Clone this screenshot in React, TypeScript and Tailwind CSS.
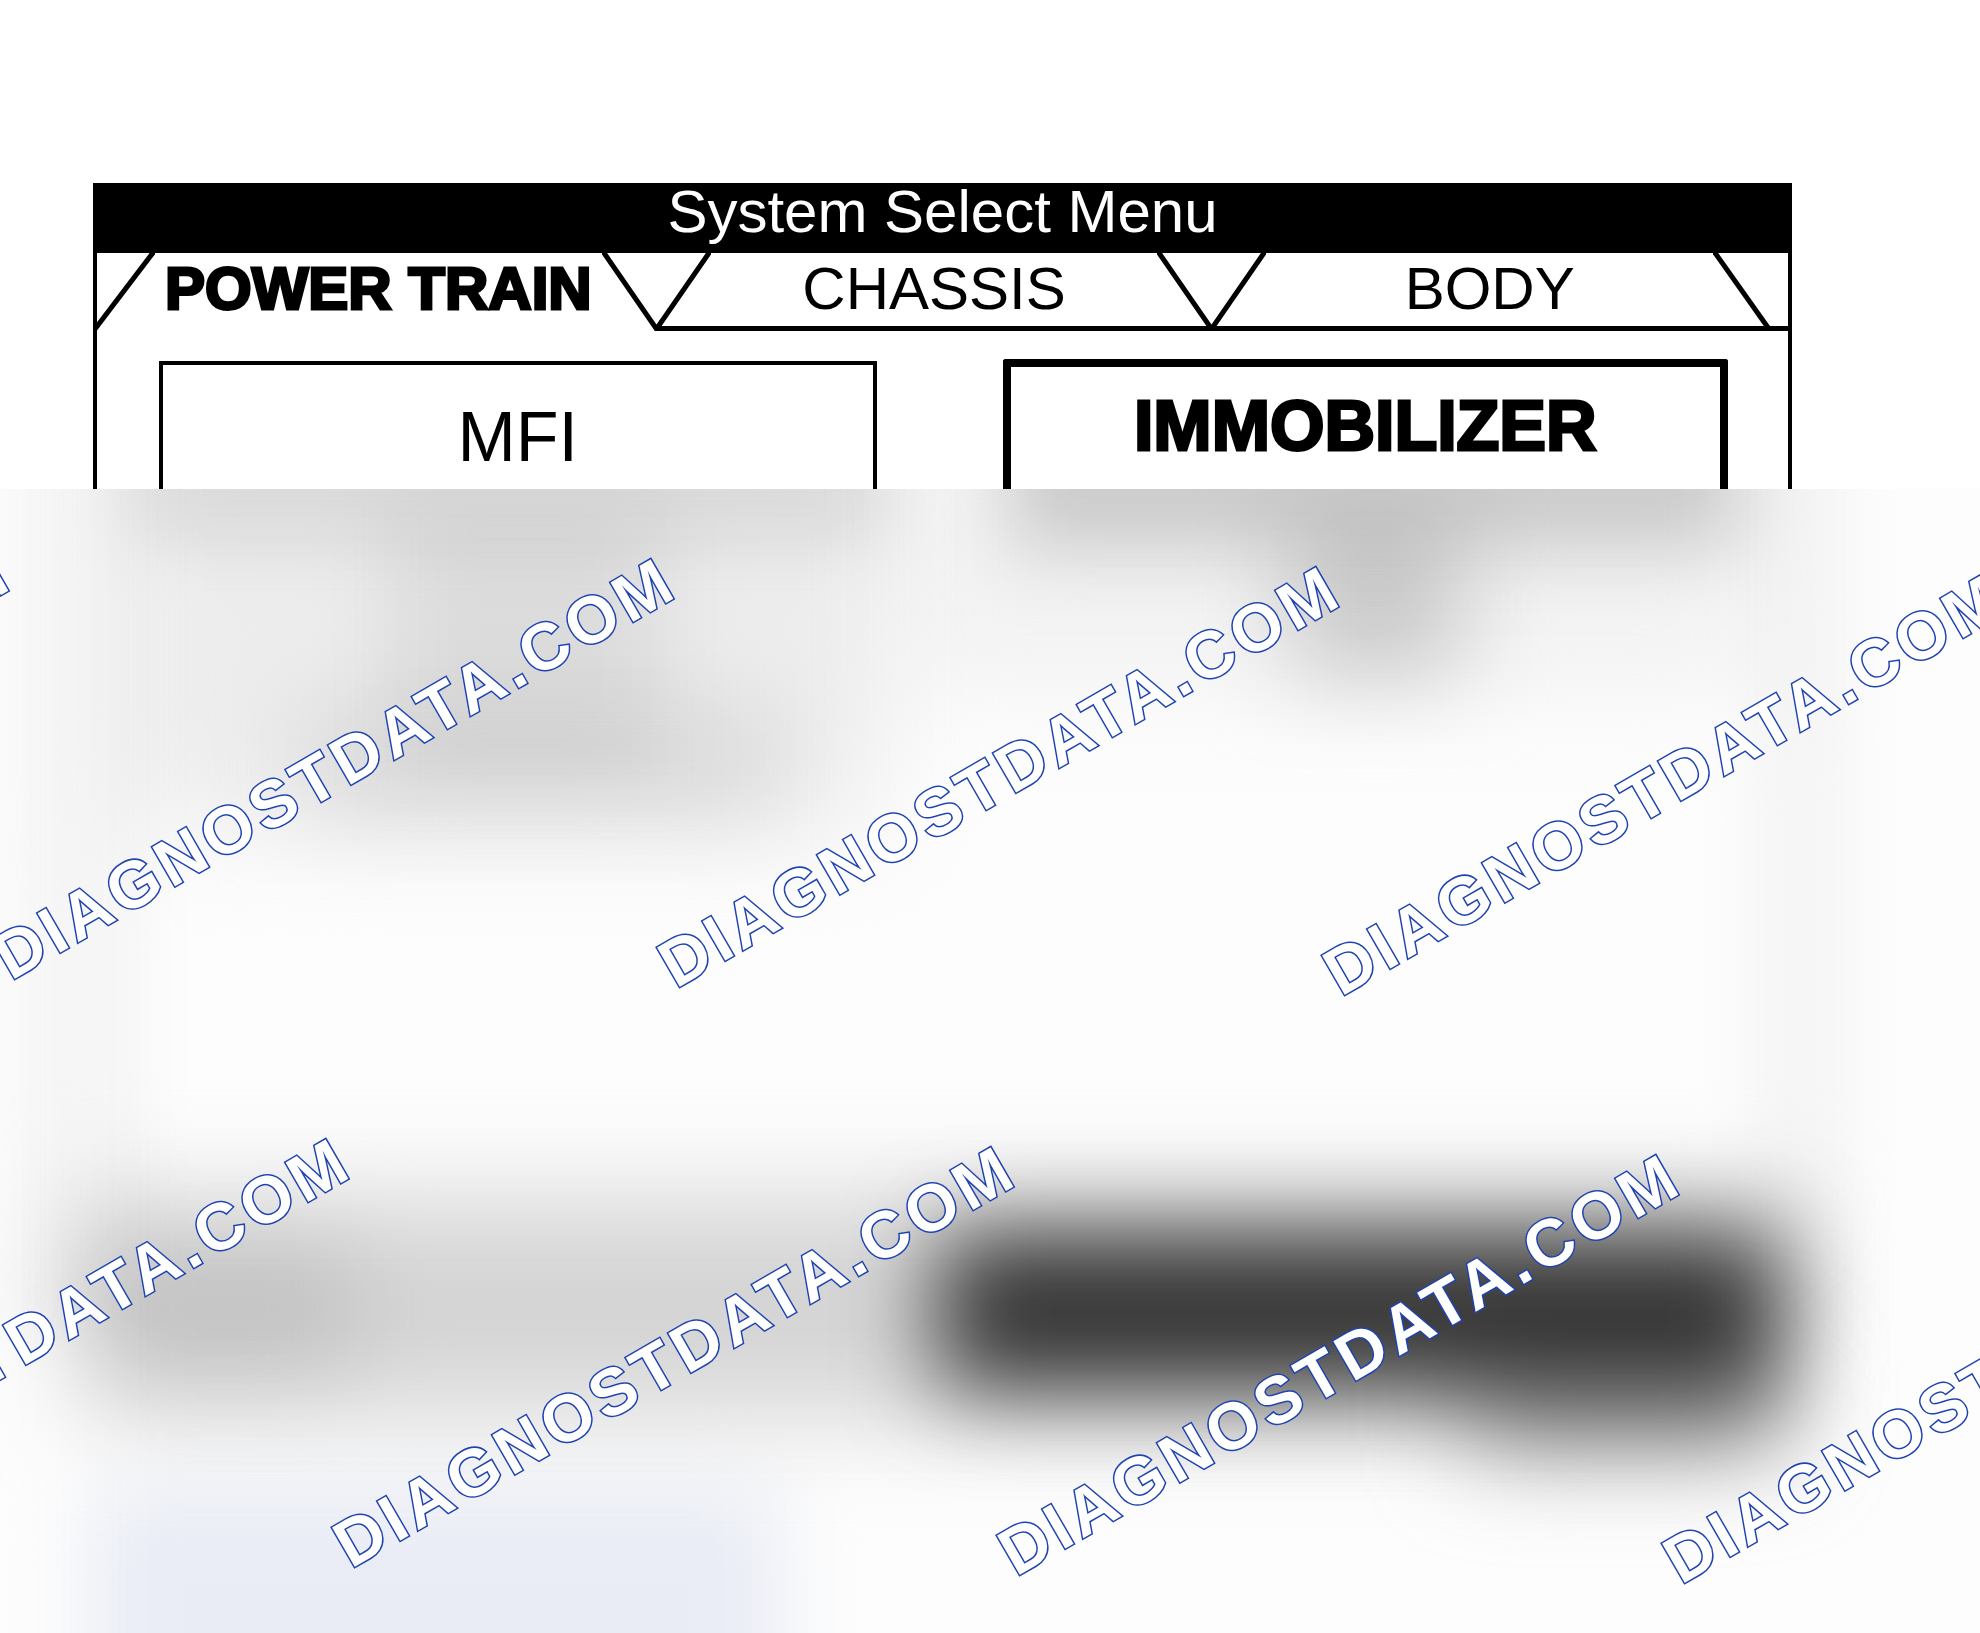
import React from "react";
import clsx from "clsx";

const WATERMARK = "DIAGNOSTDATA.COM";

// Each mark starts at its baseline origin and rises to the right
const WATERMARK_SPOTS = [
  "-left-[654px] top-[428px]",
  "left-[11px] top-[436px]",
  "left-[676px] top-[444px]",
  "left-[1341px] top-[452px]",
  "-left-[314px] top-[1016px]",
  "left-[351px] top-[1024px]",
  "left-[1016px] top-[1032px]",
  "left-[1681px] top-[1040px]",
];

// Soft shapes of the hidden lower part of the screen
const HAZE = [
  // frame sides
  "left-0 -top-[60px] w-[70px] h-[900px] bg-[#fafafa] blur-[20px]",
  "left-[60px] -top-[60px] w-[90px] h-[900px] bg-[#f8f8f8] blur-[24px]",
  "left-[1745px] -top-[60px] w-[110px] h-[900px] bg-[#f8f8f8] blur-[24px]",
  // left box
  "left-[130px] -top-[100px] w-[750px] h-[440px] bg-[#eeeeee] blur-[54px]",
  "left-[130px] -top-[100px] w-[760px] h-[155px] bg-[#ececec] blur-[32px]",
  "left-[390px] top-[20px] w-[270px] h-[260px] bg-[#eeeeee] blur-[40px]",
  "left-[300px] top-[220px] w-[480px] h-[120px] bg-[#ededed] blur-[44px]",
  // right box
  "left-[900px] -top-[100px] w-[860px] h-[300px] bg-[#f4f4f4] blur-[54px]",
  "left-[1010px] -top-[100px] w-[730px] h-[160px] bg-[#d6d6d6] blur-[36px]",
  "left-[1290px] top-[40px] w-[170px] h-[150px] bg-[#d4d4d4] blur-[46px]",
  // lower buttons
  "left-[80px] top-[710px] w-[1700px] h-[215px] bg-[#d6d6d6] blur-[52px]",
  "left-[90px] top-[750px] w-[260px] h-[140px] bg-[#ebebeb] blur-[44px]",
  "left-[940px] top-[744px] w-[840px] h-[158px] bg-[#3e3e3e] blur-[46px]",
  "left-[1470px] top-[870px] w-[310px] h-[90px] bg-[#a0a0a0] blur-[50px]",
  // bottom left
  "left-[90px] top-[1000px] w-[690px] h-[240px] bg-[#ebeef7] blur-[40px]",
];

interface TabProps {
  label: string;
  active?: boolean;
}

function Tab({ label, active = false }: TabProps) {
  return (
    <button
      type="button"
      role="tab"
      aria-selected={active}
      className={clsx(
        "flex-1 min-w-0 border-b-[5px] pb-0.5 text-[60px] leading-none whitespace-nowrap",
        active
          ? "border-transparent font-bold [-webkit-text-stroke:3px_black]"
          : "border-black"
      )}
    >
      {label}
    </button>
  );
}

// The V between two tabs, with the base line running on from baseFrom
function Divider({ baseFrom }: { baseFrom: number }) {
  return (
    <svg viewBox="0 0 109 78" className="w-[109px] h-[78px] shrink-0" aria-hidden="true">
      <path d="M0 -3 L54.5 76 L109 -3" fill="none" stroke="black" strokeWidth="5" />
      <path d={`M${baseFrom} 75.5 H109`} stroke="black" strokeWidth="5" />
    </svg>
  );
}

export default function App() {
  return (
    <div className="min-h-screen overflow-hidden bg-white pt-[183px] font-['Liberation_Sans',Arial,sans-serif] text-black">
      <main className="ml-[93px] mr-[188px] border-x-4 border-black">
        <h1 className="flex h-[70px] items-center justify-center bg-black pb-3 text-[60px] leading-none text-white">
          System Select Menu
        </h1>

        {/* Tabs */}
        <div role="tablist" className="flex h-[78px]">
          <svg viewBox="0 0 58 78" className="w-[58px] h-[78px] shrink-0" aria-hidden="true">
            <path d="M-2 76 L58 -3" stroke="black" strokeWidth="5" />
          </svg>
          <Tab label="POWER TRAIN" active />
          <Divider baseFrom={53} />
          <Tab label="CHASSIS" />
          <Divider baseFrom={0} />
          <Tab label="BODY" />
          <svg viewBox="0 0 75 78" className="w-[75px] h-[78px] shrink-0" aria-hidden="true">
            <path d="M0 -3 L56 76" stroke="black" strokeWidth="5" />
            <path d="M0 75.5 H75" stroke="black" strokeWidth="5" />
          </svg>
        </div>

        {/* Systems */}
        <div className="flex items-end gap-[126px] pl-[62px] pr-[60px] pt-7 text-[70px] leading-none">
          <button type="button" className="h-32 flex-1 border-4 border-b-0 border-black pt-5">
            MFI
          </button>
          <button
            type="button"
            className="h-[130px] flex-1 rounded-t-[3px] border-8 border-b-0 border-black pb-1 font-bold [-webkit-text-stroke:3px_black]"
          >
            IMMOBILIZER
          </button>
        </div>
      </main>

      <section className="relative isolate h-[1144px] overflow-hidden bg-[#fdfdfd]">
        {HAZE.map((shape) => (
          <div key={shape} className={clsx("absolute mix-blend-multiply", shape)} />
        ))}
        {WATERMARK_SPOTS.map((spot) => (
          <span
            key={spot}
            className={clsx(
              "absolute origin-[0_56px] -rotate-30 whitespace-nowrap text-[66px] leading-none font-bold tracking-[5px] text-white [-webkit-text-stroke:3px_#1f43b0] [paint-order:stroke_fill]",
              spot
            )}
          >
            {WATERMARK}
          </span>
        ))}
      </section>
    </div>
  );
}
